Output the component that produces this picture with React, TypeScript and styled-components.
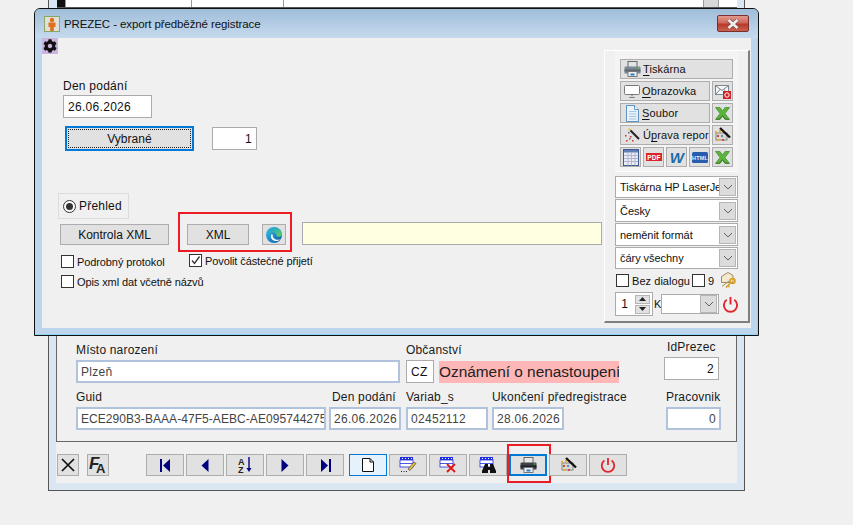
import React from "react";
import styled, { createGlobalStyle } from "styled-components";
import { FaCog } from "react-icons/fa";

const Global = createGlobalStyle`
  html, body { margin: 0; padding: 0; background: #f0f0f0; overflow: hidden; }
  body { font-family: "Liberation Sans", Arial, sans-serif; font-size: 12px; color: #111; }
  #root { width: 853px; height: 525px; position: relative; overflow: hidden; }
`;

/* ---------- background window ---------- */
const BackWindow = styled.div`
  position: absolute; left: 48px; top: 0; width: 697px; height: 491px; box-sizing: border-box;
  border: 1px solid #555; border-top: none; background: #dbe6f3;
  padding: 0 7px 7px 7px; display: flex; flex-direction: column;
`;
const TopStrip = styled.div`
  height: 8px; flex: none; display: flex; background: #fff; border-bottom: 1px solid #555; box-sizing: border-box;
  margin-left: 1px;
`;
const TopCell = styled.div<{ $w: number; $bg?: string }>`
  width: ${p => p.$w}px; flex: none; box-sizing: border-box; height: 7px;
  border-right: 1px solid #999; background: ${p => p.$bg || "#fff"};
`;
const BackClient = styled.div`
  flex: 1; background: #f0f0f0; display: flex; flex-direction: column; justify-content: flex-end;
`;
const BackPanel = styled.div`
  border-left: 1px solid #666; border-bottom: 1px solid #666; border-right: 1px solid #666;
  box-sizing: border-box; padding: 0 16px 11px 19px; display: flex; flex-direction: column;
`;
const TornRow = styled.div`
  display: flex; height: 3px; margin-bottom: 4px;
`;
const Torn = styled.div<{ $w: number; $ml: number }>`
  width: ${p => p.$w}px; margin-left: ${p => p.$ml}px; background: #b9c4d2; flex: none;
`;
const FieldRow = styled.div`
  display: flex; align-items: flex-end; margin-bottom: 7px;
  &:last-child { margin-bottom: 0; }
`;
const Field = styled.div<{ $w: number; $ml?: number; $mb?: number }>`
  width: ${p => p.$w}px; margin-left: ${p => p.$ml || 0}px; margin-bottom: ${p => p.$mb || 0}px; flex: none;
`;
const Label = styled.div<{ $ml?: number }>`
  font-size: 12px; letter-spacing: .18px; line-height: 14px; margin-bottom: 3px; white-space: nowrap; color: #1a1a1a;
  margin-left: ${p => p.$ml || 0}px;
`;
const ValueBox = styled.div<{ $w?: number; $h?: number; $blue?: boolean; $right?: boolean; $tight?: boolean }>`
  width: ${p => (p.$w ? p.$w + "px" : "100%")}; height: ${p => p.$h || 23}px; box-sizing: border-box;
  background: #fff; border: ${p => (p.$blue ? "2px solid #b1c3dc" : "1px solid #ababab")};
  color: ${p => (p.$blue ? "#444" : "#111")}; display: flex; align-items: center; overflow: hidden; white-space: nowrap;
  padding: 0 ${p => (p.$blue ? 3 : 4)}px; font-size: 12px; letter-spacing: ${p => (p.$tight ? ".06px" : ".3px")};
  justify-content: ${p => (p.$right ? "flex-end" : "flex-start")};
`;
const Inline = styled.div`
  display: flex; align-items: center;
`;
const Note = styled.div`
  margin-left: 5px; width: 180px; height: 22px; background: #ffb6b6; color: #222;
  font-size: 15.4px; line-height: 22px; white-space: nowrap; overflow: hidden;
`;
const Toolbar = styled.div`
  height: 41px; box-sizing: border-box; padding: 12px 0 0 1px; display: flex; align-items: flex-start;
`;
const ToolBtn = styled.div<{ $w?: number; $ml?: number; $state?: "new" | "focus" }>`
  position: relative; flex: none; width: ${p => p.$w || 38}px; height: 22px; box-sizing: border-box;
  margin-left: ${p => (p.$ml === undefined ? 2 : p.$ml)}px;
  display: flex; align-items: center; justify-content: center;
  background: ${p => (p.$state === "new" ? "#e5f1fb" : "#e1e1e1")};
  border: ${p => (p.$state === "new" ? "1px solid #0078d7" : p.$state === "focus" ? "2px solid #0078d7" : "1px solid #adadad")};
`;
const RedMark = styled.div<{ $l: number; $r: number; $t: number; $b: number }>`
  position: absolute; left: ${p => p.$l}px; right: ${p => p.$r}px; top: ${p => p.$t}px; bottom: ${p => p.$b}px;
  border: 2px solid #ed1c24; pointer-events: none;
`;

/* ---------- dialog ---------- */
const Dialog = styled.div`
  position: absolute; left: 34px; top: 8px; width: 725px; height: 328px; box-sizing: border-box;
  border: 1px solid #111; border-radius: 6px 6px 0 0; background: #bdd5ed;
  box-shadow: inset 0 -1px 0 #8fd6f2, inset -1px 0 0 #8fd6f2;
  display: flex; flex-direction: column; padding: 0 7px 7px 7px;
`;
const TitleBar = styled.div`
  height: 29px; flex: none; margin: 0 -7px; padding: 0 9px 0 9px; display: flex; align-items: center;
  border-radius: 5px 5px 0 0; background: linear-gradient(#9fbdd9, #c6daee);
`;
const TitleText = styled.div`
  margin-left: 4px; font-size: 11.5px; letter-spacing: -.1px; color: #111; flex: 1; white-space: nowrap; padding-top: 1px;
`;
const CloseBtn = styled.div`
  width: 32px; height: 17px; box-sizing: border-box; border: 1px solid #7a2e30; border-radius: 2px;
  display: flex; align-items: center; justify-content: center;
  background: linear-gradient(#e09a8e 0, #d0685c 45%, #b83a2c 55%, #c9604e 100%);
`;
const Client = styled.div`
  flex: 1; background: #f0f0f0; display: flex; min-height: 0;
`;
const LeftCol = styled.div`
  width: 562px; flex: none; display: flex; flex-direction: column; align-items: flex-start;
`;
const GearBox = styled.div`
  width: 16px; height: 16px; background: #c9b5de; display: flex; align-items: center; justify-content: center; flex: none;
`;
const DateLabel = styled.div`
  margin: 25px 0 2px 21px; line-height: 14px; letter-spacing: .25px; font-size: 12px;
`;
const DateBox = styled(ValueBox)`
  margin-left: 21px; flex: none;
`;
const SelectRow = styled.div`
  display: flex; align-items: flex-start; margin: 8px 0 0 23px;
`;
const Focused = styled.div`
  width: 129px; height: 25px; box-sizing: border-box; border: 2px solid #0078d7; background: #e1e1e1; padding: 1px;
  display: flex;
`;
const FocusInner = styled.div`
  flex: 1; border: 1px dotted #222; display: flex; align-items: center; justify-content: center; letter-spacing: .05px;
`;
const CountBox = styled(ValueBox)`
  margin: 1px 0 0 18px;
`;
const Group = styled.div`
  margin: 42px 0 0 16px; width: 71px; height: 26px; box-sizing: border-box; border: 1px solid #dcdcdc;
  display: flex; align-items: center; padding-left: 4px; letter-spacing: .2px;
`;
const Radio = styled.span`
  width: 13px; height: 13px; box-sizing: border-box; border: 1px solid #333; border-radius: 50%; background: #fff;
  display: flex; align-items: center; justify-content: center; margin-right: 3px;
  &::after { content: ""; width: 7px; height: 7px; border-radius: 50%; background: #333; }
`;
const ActionRow = styled.div`
  display: flex; align-items: flex-end; margin: 3px 0 0 18px;
`;
const PlainBtn = styled.div<{ $w: number; $ml?: number }>`
  position: relative; width: ${p => p.$w}px; height: 21px; box-sizing: border-box; margin-left: ${p => p.$ml || 0}px; flex: none;
  background: #e1e1e1; border: 1px solid #adadad; display: flex; align-items: center; justify-content: center; letter-spacing: 0;
`;
const XmlGroup = styled.div`
  position: relative; display: flex; margin-left: 18px;
`;
const YellowBox = styled.div`
  margin-left: 16px; width: 300px; height: 23px; box-sizing: border-box; background: #ffffe1; border: 1px solid #ababab;
`;
const CheckRow = styled.div<{ $mt: number }>`
  display: flex; align-items: flex-start; margin: ${p => p.$mt}px 0 0 19px;
`;
const CheckItem = styled.label<{ $w?: number; $mt?: number }>`
  display: flex; align-items: center; height: 13px; font-size: 11px; letter-spacing: -.1px; white-space: nowrap;
  width: ${p => (p.$w ? p.$w + "px" : "auto")}; margin-top: ${p => p.$mt || 0}px;
`;
const Box = styled.span<{ $ml?: number }>`
  width: 13px; height: 13px; box-sizing: border-box; border: 1px solid #333; background: #fff; margin-right: 3px; flex: none;
  display: flex; align-items: center; justify-content: center;
  margin-left: ${p => p.$ml || 0}px;
`;

/* ---------- output panel ---------- */
const OutPanel = styled.div`
  width: 146px; height: 273px; margin-top: 12px; box-sizing: border-box; flex: none;
  border-top: 1px solid #fff; border-left: 1px solid #fff; border-right: 2px solid #7f7f7f; border-bottom: 2px solid #7f7f7f;
  padding: 0 0 0 10px;
`;
const PrintGroup = styled.div`
  width: 123px; box-sizing: border-box; background: #f4f4f4; border-bottom: 1px solid #fff; padding: 8px 0 4px 5px;
`;
const PrintGrid = styled.div`
  display: grid; grid-template-columns: repeat(5, 21px); grid-auto-rows: 20px; gap: 2px;
`;
const PrintBtn = styled.div<{ $span?: number; $gap?: number; $pl?: number }>`
  grid-column: span ${p => p.$span || 1}; box-sizing: border-box; background: #e1e1e1; border: 1px solid #adadad;
  display: flex; align-items: center; overflow: hidden; white-space: nowrap; letter-spacing: .12px; font-size: 11px;
  justify-content: ${p => (p.$span ? "flex-start" : "center")}; padding-left: ${p => p.$pl ?? (p.$span ? 3 : 0)}px;
  & > svg { flex: none; margin-right: ${p => p.$gap ?? 2}px; }
  & > svg:only-child { margin-right: 0; }
  & u { text-underline-offset: 2px; }
`;
const CombosGrid = styled.div`
  display: grid; grid-template-rows: 22px 23px 23px 22px; row-gap: 1px; width: 123px; margin-top: 4px;
`;
const Combo = styled.div<{ $w?: number; $ml?: number }>`
  box-sizing: border-box; background: #fff; border: 1px solid #ababab; display: flex; align-items: center;
  padding-left: 4px; letter-spacing: -.05px; font-size: 11px; overflow: hidden; white-space: nowrap;
  width: ${p => (p.$w ? p.$w + "px" : "auto")}; margin-left: ${p => p.$ml || 0}px; flex: none; position: relative;
`;
const ComboText = styled.span`
  flex: 1; overflow: hidden; min-width: 0;
`;
const ComboArrow = styled.span`
  width: 17px; height: 18px; flex: none; box-sizing: border-box; background: #dcdcdc; border: 1px solid #b5b5b5;
  display: flex; align-items: center; justify-content: center; margin-right: 1px;
`;
const OptRow = styled.div`
  display: flex; align-items: center; margin: 5px 0 0 1px; height: 13px; letter-spacing: .05px; font-size: 11px; white-space: nowrap;
`;
const OptText = styled.span<{ $w: number }>`
  width: ${p => p.$w}px; flex: none;
`;
const CopiesRow = styled.div`
  display: flex; align-items: center; height: 24px; margin-top: 5px;
`;
const Spinner = styled.div`
  width: 38px; height: 24px; box-sizing: border-box; border: 1px solid #ababab; background: #fff; display: flex; align-items: center; flex: none;
`;
const SpinValue = styled.span`
  width: 17px; text-align: center; font-size: 12px; margin-right: 2px;
`;
const SpinCol = styled.div`
  margin-left: 0; width: 15px; display: flex; flex-direction: column; gap: 1px;
`;
const SpinBtn = styled.div`
  height: 9px; background: #e1e1e1; border: 1px solid #b5b5b5; box-sizing: border-box; display: flex; align-items: center; justify-content: center;
`;
const KLetter = styled.span`
  width: 7px; flex: none; margin-left: 1px; overflow: hidden; font-size: 11px;
`;
const PowerSlot = styled.span`
  margin-left: 3px; display: flex;
`;

/* ---------- icons ---------- */
const NAVY = "#000080";
const AppIcon = () => (
  <svg width="16" height="16" viewBox="0 0 16 16">
    <rect x=".5" y=".5" width="15" height="15" fill="#dfe0da" stroke="#8aa860" />
    <circle cx="8" cy="4" r="2.200" fill="#e0701c" />
    <path d="M4.500 6.500h7v4.500H9.800V15H6.200v-4H4.500z" fill="#e0701c" />
  </svg>
);
const CloseX = () => (
  <svg width="14" height="10" viewBox="0 0 14 10">
    <path d="M2.500 1 L11.500 9 M11.500 1 L2.500 9" stroke="#6a3a38" strokeWidth="3.800" />
    <path d="M2.500 1 L11.500 9 M11.500 1 L2.500 9" stroke="#ececec" strokeWidth="2.800" />
  </svg>
);
const Edge = () => (
  <svg width="18" height="18" viewBox="0 0 18 18">
    <defs>
      <linearGradient id="edgeA" x1="0" y1="0" x2="1" y2="1">
        <stop offset="0" stopColor="#35c1f1" /><stop offset="1" stopColor="#0c59a4" />
      </linearGradient>
      <linearGradient id="edgeB" x1="0" y1="0" x2="1" y2="1">
        <stop offset="0" stopColor="#1b9de2" /><stop offset="1" stopColor="#5fd35a" />
      </linearGradient>
    </defs>
    <circle cx="9" cy="9" r="8" fill="url(#edgeA)" />
    <path d="M4 5C6 1 13 0 16 5c1.500 2.500 1 5-1 5.500-2 .5-3.500 0-3.500-1C11.500 7 9 5.500 6.500 6.500 4.500 7.300 3.500 9 3.500 9z" fill="url(#edgeB)" />
    <path d="M6 9.500c-.5 3 2 5.500 5 5.500 2 0 3.500-.7 4.500-1.800-2 1-5 .8-6.500-.7-1-1-1.500-2-1.300-3.500C7.600 8 6.300 8 6 9.500z" fill="#fff" />
  </svg>
);
const Printer = ({ soft = false }: { soft?: boolean }) => (
  <svg width="17" height="16" viewBox="0 0 17 16">
    <rect x="4" y=".5" width="9" height="6" fill={soft ? "#dfe6ea" : "#e8e8e8"} stroke="#666" />
    <path d="M1.500 5.500h14a1 1 0 0 1 1 1v6H.5v-6a1 1 0 0 1 1-1z" fill={soft ? "#7c8890" : "#3c4248"} />
    <rect x=".5" y="8.500" width="16" height="2" fill={soft ? "#5c666e" : "#1e2226"} />
    <rect x="4" y="10.500" width="9" height="5" fill="#eef2f5" stroke="#777" />
    <rect x="6.500" y="12.500" width="4" height="2" fill="#2a80c0" />
    <circle cx="14.500" cy="7" r=".8" fill="#6ec05a" />
  </svg>
);
const Monitor = () => (
  <svg width="16" height="13" viewBox="0 0 16 13">
    <rect x=".5" y=".5" width="15" height="9" rx="1" fill="#fff" stroke="#777" />
    <path d="M8 10v1.500M5 12.500h6" stroke="#888" strokeWidth="1.200" />
  </svg>
);
const Doc = () => (
  <svg width="13" height="17" viewBox="0 0 13 17">
    <path d="M.5.500H8.500L12.500 4.500v12H.5z" fill="#eaf3fb" stroke="#5f93c4" />
    <path d="M8.500 .5V4.500h4" fill="#fff" stroke="#5f93c4" />
    <path d="M3 6.500h7.500M3 9h7.500M3 11.500h7.500M3 14h7.500" stroke="#a9c4de" />
  </svg>
);
const MailAt = () => (
  <svg width="16" height="15" viewBox="0 0 16 15">
    <rect x=".5" y="1.500" width="13" height="9" fill="#f4f6f8" stroke="#7b8791" />
    <path d="M1 2l6 4.500L13 2M1 10l4.500-5M13 10L8.500 5" fill="none" stroke="#7b8791" />
    <rect x="8" y="7" width="8" height="8" fill="#d01f26" />
    <circle cx="12" cy="11" r="2.200" fill="none" stroke="#fff" />
  </svg>
);
const Excel = () => (
  <svg width="15" height="13" viewBox="0 0 15 13">
    <path d="M.5.500h4.500l2.500 3.500L10 .5h4.500L10 6.500l4.500 6H10L7.500 9 5 12.500H.5L5 6.500z" fill="#5bb53c" stroke="#3f8a2a" strokeWidth=".7" />
    <path d="M1 12h3.800l2.700-3.500L10.200 12H14" fill="none" stroke="#2f7020" strokeWidth=".8" />
  </svg>
);
const Wand = () => (
  <svg width="17" height="16" viewBox="0 0 17 16">
    <path d="M6 3l9 9" stroke="#222" strokeWidth="2" />
    <path d="M4.500 1.500l2 2" stroke="#e8d060" strokeWidth="2" />
    <g fill="#c0392b">
      <rect x="1" y="8" width="1.500" height="1.500" /><rect x="6" y="9" width="1.500" height="1.500" />
      <rect x="2" y="13" width="1.500" height="1.500" /><rect x="8" y="13" width="1.500" height="1.500" />
    </g>
    <g fill="#7a5fa0">
      <rect x="4" y="5" width="1.500" height="1.500" /><rect x="5" y="11" width="1.500" height="1.500" />
    </g>
  </svg>
);
const WandPrinter = () => (
  <svg width="17" height="16" viewBox="0 0 17 16">
    <rect x="2" y="6" width="11" height="7" fill="#d8d8d0" stroke="#888" />
    <g fill="#e8b030"><rect x="1" y="4" width="2" height="2" /><rect x="5" y="3" width="2" height="2" /><rect x="4" y="12" width="2" height="2" /></g>
    <g fill="#d04a40"><rect x="8" y="12" width="2" height="2" /><rect x="3" y="8" width="2" height="2" /></g>
    <rect x="7" y="8" width="2" height="2" fill="#5a90c8" />
    <path d="M6 1l10 9.500" stroke="#111" strokeWidth="2.400" />
  </svg>
);
const TableIco = () => (
  <svg width="16" height="17" viewBox="0 0 16 17">
    <rect x=".5" y=".5" width="15" height="16" fill="#e9eef6" stroke="#3f5a8f" />
    <rect x="1" y="1" width="14" height="2.500" fill="#5f7fb5" />
    <path d="M1 6.500h14M1 9.500h14M1 12.500h14M5 3.500v13M8.500 3.500v13M12 3.500v13" stroke="#b5b5d0" />
  </svg>
);
const PdfIco = () => (
  <svg width="16" height="8" viewBox="0 0 16 8">
    <rect width="16" height="8" fill="#d8242a" />
    <text x="8" y="6.700" textAnchor="middle" fontFamily="Liberation Sans" fontWeight="700" fontSize="6.500" fill="#fff">PDF</text>
  </svg>
);
const WordIco = () => (
  <svg width="16" height="14" viewBox="0 0 16 14">
    <text x="8" y="13" textAnchor="middle" fontFamily="Liberation Sans" fontStyle="italic" fontWeight="700" fontSize="15" fill="#1d6ca8">W</text>
  </svg>
);
const HtmlIco = () => (
  <svg width="16" height="11" viewBox="0 0 16 11">
    <rect width="16" height="11" rx="1.500" fill="#2a5cae" />
    <text x="8" y="8" textAnchor="middle" fontFamily="Liberation Sans" fontWeight="700" fontSize="5.500" fill="#e8f0ff">HTML</text>
  </svg>
);
const ChevronDown = () => (
  <svg width="10" height="6" viewBox="0 0 10 6"><path d="M1 1l4 4 4-4" fill="none" stroke="#606060" /></svg>
);
const Check = () => (
  <svg width="11" height="11" viewBox="0 0 11 11"><path d="M2 5.500l2.500 3L9.500 1.500" fill="none" stroke="#333" strokeWidth="1.300" /></svg>
);
const Tri = ({ up }: { up?: boolean }) => (
  <svg width="7" height="4" viewBox="0 0 7 4"><path d={up ? "M3.500 0L7 4H0z" : "M0 0h7L3.500 4z"} fill="#222" /></svg>
);
const KeyMail = () => (
  <svg width="16" height="17" viewBox="0 0 16 17">
    <path d="M.5 4.500L7 .5l5 3v7H.5z" fill="#f3e8d0" stroke="#a08a60" />
    <path d="M1 14.500L8 9" stroke="#a08a60" />
    <circle cx="11.500" cy="9" r="2.500" fill="none" stroke="#d8a020" strokeWidth="1.600" />
    <path d="M9.500 11L5 15.500M7 13.500l1.500 1.500" stroke="#d8a020" strokeWidth="1.600" />
  </svg>
);
const Power = ({ size = 18 }: { size?: number }) => (
  <svg width={size} height={size} viewBox="0 0 18 18">
    <path d="M9 1V9" stroke="#e0262c" strokeWidth="2" />
    <path d="M5 4A7 7 0 1 0 13 4" fill="none" stroke="#e0262c" strokeWidth="2" />
  </svg>
);
const BigX = () => (
  <svg width="16" height="14" viewBox="0 0 16 14"><path d="M2 1l12 12M14 1L2 13" stroke="#111" strokeWidth="1.700" /></svg>
);
const FontIco = () => (
  <svg width="18" height="18" viewBox="0 0 18 18">
    <text fontFamily="Liberation Sans" fontWeight="700" fill="#222">
      <tspan x="0" y="13" fontStyle="italic" fontSize="17">F</tspan>
      <tspan x="7" y="17" fontSize="13">A</tspan>
    </text>
  </svg>
);
const NavFirst = () => (
  <svg width="11" height="13" viewBox="0 0 11 13"><rect x="0" y="0" width="2" height="13" fill={NAVY} /><path d="M10 0v13L3 6.500z" fill={NAVY} /></svg>
);
const NavPrev = () => (
  <svg width="8" height="13" viewBox="0 0 8 13"><path d="M7.500 0v13L.5 6.500z" fill={NAVY} /></svg>
);
const NavNext = () => (
  <svg width="8" height="13" viewBox="0 0 8 13"><path d="M.5 0v13l7-6.500z" fill={NAVY} /></svg>
);
const NavLast = () => (
  <svg width="11" height="13" viewBox="0 0 11 13"><path d="M1 0v13l7-6.500z" fill={NAVY} /><rect x="9" y="0" width="2" height="13" fill={NAVY} /></svg>
);
const SortIco = () => (
  <svg width="15" height="16" viewBox="0 0 15 16">
    <text fontFamily="Liberation Sans" fontWeight="700" fontSize="9" fill="#222">
      <tspan x="0" y="7.500">A</tspan>
      <tspan x="0" y="15.500">Z</tspan>
    </text>
    <path d="M11 0v11" stroke={NAVY} strokeWidth="1.400" />
    <path d="M8.500 11h5L11 15z" fill={NAVY} />
  </svg>
);
const NewDoc = () => (
  <svg width="12" height="14" viewBox="0 0 12 14"><path d="M.5.500H8L11.500 4v9.500H.5z" fill="#fff" stroke="#111" /><path d="M8 .5V4h3.500" fill="none" stroke="#111" /></svg>
);
const GridBase = () => (
  <>
    <rect x="1" y="0" width="13" height="3" fill="#1f2fe0" />
    <path d="M3 1.500h1M6 1.500h1M9 1.500h1M12 1.500h1" stroke="#fff" />
    <rect x="1" y="3" width="13" height="7" fill="#fff" stroke="#1f2fe0" strokeWidth=".8" />
    <path d="M1 6.500h13" stroke="#1f2fe0" strokeWidth=".8" />
  </>
);
const EditIco = () => (
  <svg width="18" height="16" viewBox="0 0 18 16">
    <GridBase />
    <path d="M9 12l6-7 2 1.500-6 7z" fill="#e8c040" stroke="#333" strokeWidth=".6" />
    <path d="M2 14.500h7" stroke="#222" strokeDasharray="1 1.500" />
  </svg>
);
const DeleteIco = () => (
  <svg width="18" height="16" viewBox="0 0 18 16">
    <GridBase />
    <path d="M8 7l8 8M16 7l-8 8" stroke="#e01818" strokeWidth="1.800" />
  </svg>
);
const FindIco = () => (
  <svg width="18" height="16" viewBox="0 0 18 16">
    <GridBase />
    <path d="M6 7h3v3h2V7h3l3 7v2h-6v-3H9v3H3v-2z" fill="#111" />
  </svg>
);

const Fld = ({ label, w, ml, value, blue, right, mb, labelMl, tight }: {
  label: string; w: number; ml?: number; value: string; blue?: boolean; right?: boolean; mb?: number; labelMl?: number; tight?: boolean;
}) => (
  <Field $w={w} $ml={ml} $mb={mb}>
    <Label $ml={labelMl}>{label}</Label>
    <ValueBox $blue={blue} $right={right} $tight={tight}>{value}</ValueBox>
  </Field>
);

export default function App() {
  return (
    <>
      <Global />
      <BackWindow>
        <TopStrip>
          <TopCell $w={9} $bg="#111" />
          <TopCell $w={126} />
          <TopCell $w={92} />
          <TopCell $w={420} />
          <TopCell $w={15} $bg="#d8d8d8" />
        </TopStrip>
        <BackClient>
          <BackPanel>
            <TornRow>
              <Torn $w={72} $ml={0} />
              <Torn $w={89} $ml={58} />
              <Torn $w={153} $ml={5} />
              <Torn $w={128} $ml={6} />
              <Torn $w={131} $ml={2} />
            </TornRow>
            <FieldRow>
              <Fld label="Místo narození" w={324} value="Plzeň" blue />
              <Field $w={213} $ml={6}>
                <Label>Občanství</Label>
                <Inline>
                  <ValueBox $w={28}>CZ</ValueBox>
                  <Note>Oznámení o nenastoupení</Note>
                </Inline>
              </Field>
              <Fld label="IdPrezec" w={55} ml={45} value="2" right mb={3} labelMl={3} />
            </FieldRow>
            <FieldRow>
              <Fld label="Guid" w={250} value="ECE290B3-BAAA-47F5-AEBC-AE095744275" blue tight />
              <Fld label="Den podání" w={72} ml={3} value="26.06.2026" blue labelMl={3} />
              <Fld label="Variab_s" w={82} ml={5} value="02452112" blue />
              <Fld label="Ukončení předregistrace" w={72} ml={4} value="28.06.2026" blue />
              <Fld label="Pracovnik" w={55} ml={102} value="0" blue right />
            </FieldRow>
          </BackPanel>
          <Toolbar>
            <ToolBtn $w={22} $ml={0}><BigX /></ToolBtn>
            <ToolBtn $w={22} $ml={8}><FontIco /></ToolBtn>
            <ToolBtn $ml={37}><NavFirst /></ToolBtn>
            <ToolBtn><NavPrev /></ToolBtn>
            <ToolBtn><SortIco /></ToolBtn>
            <ToolBtn><NavNext /></ToolBtn>
            <ToolBtn><NavLast /></ToolBtn>
            <ToolBtn $ml={5} $state="new"><NewDoc /></ToolBtn>
            <ToolBtn><EditIco /></ToolBtn>
            <ToolBtn><DeleteIco /></ToolBtn>
            <ToolBtn><FindIco /></ToolBtn>
            <ToolBtn $state="focus">
              <Printer />
              <RedMark $l={-4} $r={-6} $t={-12} $b={-9} />
            </ToolBtn>
            <ToolBtn><WandPrinter /></ToolBtn>
            <ToolBtn><Power size={16} /></ToolBtn>
          </Toolbar>
        </BackClient>
      </BackWindow>

      <Dialog>
        <TitleBar>
          <AppIcon />
          <TitleText>PREZEC - export předběžné registrace</TitleText>
          <CloseBtn><CloseX /></CloseBtn>
        </TitleBar>
        <Client>
          <LeftCol>
            <GearBox><FaCog size={14} color="#111" /></GearBox>
            <DateLabel>Den podání</DateLabel>
            <DateBox $w={89}>26.06.2026</DateBox>
            <SelectRow>
              <Focused><FocusInner>Vybrané</FocusInner></Focused>
              <CountBox $w={45} $right>1</CountBox>
            </SelectRow>
            <Group><Radio />Přehled</Group>
            <ActionRow>
              <PlainBtn $w={109}>Kontrola XML</PlainBtn>
              <XmlGroup>
                <PlainBtn $w={62}>XML</PlainBtn>
                <PlainBtn $w={24} $ml={13}><Edge /></PlainBtn>
                <RedMark $l={-9} $r={-6} $t={-12} $b={-7} />
              </XmlGroup>
              <YellowBox />
            </ActionRow>
            <CheckRow $mt={9}>
              <CheckItem $w={128} $mt={1}><Box />Podrobný protokol</CheckItem>
              <CheckItem><Box><Check /></Box>Povolit částečné přijetí</CheckItem>
            </CheckRow>
            <CheckRow $mt={7}>
              <CheckItem><Box />Opis xml dat včetně názvů</CheckItem>
            </CheckRow>
          </LeftCol>
          <OutPanel>
            <PrintGroup>
              <PrintGrid>
                <PrintBtn $span={5}><Printer soft /><span><u>T</u>iskárna</span></PrintBtn>
                <PrintBtn $span={4}><Monitor /><span><u>O</u>brazovka</span></PrintBtn>
                <PrintBtn><MailAt /></PrintBtn>
                <PrintBtn $span={4} $pl={5} $gap={3}><Doc /><span><u>S</u>oubor</span></PrintBtn>
                <PrintBtn><Excel /></PrintBtn>
                <PrintBtn $span={4}><Wand /><span>Ú<u>p</u>rava repor</span></PrintBtn>
                <PrintBtn><WandPrinter /></PrintBtn>
                <PrintBtn><TableIco /></PrintBtn>
                <PrintBtn><PdfIco /></PrintBtn>
                <PrintBtn><WordIco /></PrintBtn>
                <PrintBtn><HtmlIco /></PrintBtn>
                <PrintBtn><Excel /></PrintBtn>
              </PrintGrid>
            </PrintGroup>
            <CombosGrid>
              <Combo><ComboText>Tiskárna HP LaserJet</ComboText><ComboArrow><ChevronDown /></ComboArrow></Combo>
              <Combo><ComboText>Česky</ComboText><ComboArrow><ChevronDown /></ComboArrow></Combo>
              <Combo><ComboText>neměnit formát</ComboText><ComboArrow><ChevronDown /></ComboArrow></Combo>
              <Combo><ComboText>čáry všechny</ComboText><ComboArrow><ChevronDown /></ComboArrow></Combo>
            </CombosGrid>
            <OptRow>
              <Box />
              <OptText $w={60}>Bez dialogu</OptText>
              <Box />
              <OptText $w={13}>9</OptText>
              <KeyMail />
            </OptRow>
            <CopiesRow>
              <Spinner>
                <SpinValue>1</SpinValue>
                <SpinCol>
                  <SpinBtn><Tri up /></SpinBtn>
                  <SpinBtn><Tri /></SpinBtn>
                </SpinCol>
              </Spinner>
              <KLetter>K</KLetter>
              <Combo $w={58}><ComboText /><ComboArrow><ChevronDown /></ComboArrow></Combo>
              <PowerSlot><Power size={17} /></PowerSlot>
            </CopiesRow>
          </OutPanel>
        </Client>
      </Dialog>
    </>
  );
}
